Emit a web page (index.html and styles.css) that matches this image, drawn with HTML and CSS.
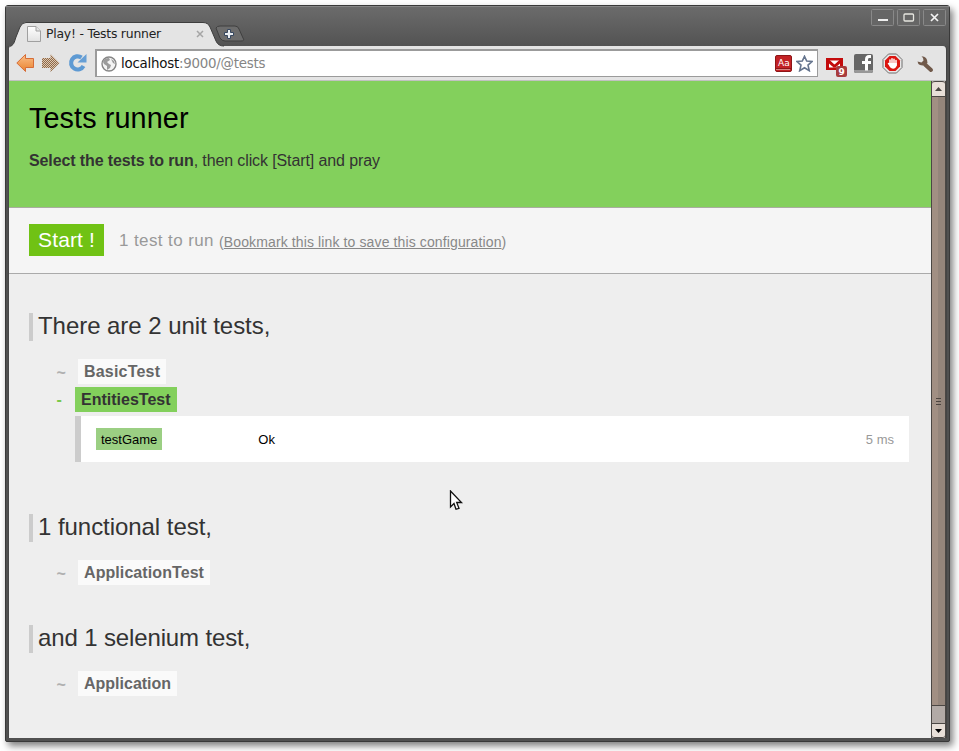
FILE: index.html
```html
<!DOCTYPE html>
<html lang="en">
<head>
<meta charset="utf-8">
<title>Play! - Tests runner</title>
<link rel="stylesheet" href="styles.css">
</head>
<body>
<div class="window">
  <div class="titlebar">
    <svg class="tabshape" width="240" height="26" viewBox="0 0 240 26">
      <path d="M207 6Q208 4 211 4H226Q229 4 230 7L234 16Q236 19 232 19H216Q213 19 211 16Z" fill="#6c6c6c" stroke="#3f3f3f"/>
      <path d="M0 25C5 23 5 21 7 15L11 5Q13 0.500 17 0.500H194Q199 0.500 201 5L207 19Q209 24 215 24H240V26H0Z" fill="#e4e4e4"/>
      <path d="M0 25C5 23 5 21 7 15L11 5Q13 .5 17 .5H194Q199 .5 201 5L207 19Q209 24 215 24" fill="none" stroke="#3d3d3d"/>
      <path d="M218.500 7.500h3v3h3v3h-3v3h-3v-3h-3v-3h3z" fill="#e9edf2" stroke="#36465e"/>
    </svg>
    <div class="tab">
      <svg width="14" height="16" viewBox="0 0 14 16"><defs><linearGradient id="pg" x2="0" y2="1"><stop stop-color="#fff"/><stop offset="1" stop-color="#e2e2e2"/></linearGradient></defs><path d="M.5.5H9L13.500 5V15.500H.5Z" fill="url(#pg)" stroke="#a0a0a0"/><path d="M9 .5V5H13.500" fill="#e5e5e5" stroke="#a0a0a0"/></svg>
      <span class="tabtitle">Play! - Tests runner</span>
      <svg width="8" height="8" viewBox="0 0 8 8"><path d="M1 1L7 7M7 1L1 7" stroke="#a5a5a5" stroke-width="1.500"/></svg>
    </div>
    <div class="controls">
      <svg width="23" height="17" viewBox="0 0 23 17"><rect class="btn" x=".5" y=".5" width="22" height="16" rx="1"/><path d="M7 11h10" stroke="#eee" stroke-width="2"/></svg>
      <svg width="23" height="17" viewBox="0 0 23 17"><rect class="btn" x=".5" y=".5" width="22" height="16" rx="1"/><rect x="7" y="5" width="9.500" height="7" rx="1" fill="none" stroke="#e6e6e0" stroke-width="1.300"/></svg>
      <svg width="23" height="17" viewBox="0 0 23 17"><rect class="btn" x=".5" y=".5" width="22" height="16" rx="1"/><path d="M8 5L15 12M15 5L8 12" stroke="#f4f4f4" stroke-width="1.700"/></svg>
    </div>
  </div>
  <div class="frame">
    <div class="toolbar">
      <svg class="nav" width="72" height="20" viewBox="0 0 72 20">
        <defs><linearGradient id="og" x2="0" y2="1"><stop stop-color="#fbc08a"/><stop offset="1" stop-color="#e9822d"/></linearGradient>
        <pattern id="dots" width="2" height="2" patternUnits="userSpaceOnUse"><rect width="2" height="2" fill="#ddc8b2"/><path d="M0 0h1v1H0zM1 1h1v1H1z" fill="#8e6949"/></pattern></defs>
        <path d="M.8 10L9.500 1.500V5.500H17.500V14.500H9.500V18.500Z" fill="url(#og)" stroke="#d66d38"/>
        <path d="M43.500 10L34.500 1V5H26V15H34.500V19Z" fill="url(#dots)"/>
        <path d="M67.500 13A6.600 6.600 0 1 1 65.500 4.500" fill="none" stroke="#5e9ad3" stroke-width="4.200"/><path d="M70.500 1V9.500H61.500Z" fill="#679fd5"/>
      </svg>
      <div class="address">
        <svg width="16" height="16" viewBox="0 0 16 16"><circle cx="8" cy="8" r="7" fill="#f4f4f4" stroke="#858585" stroke-width="1.400"/><path d="M2 6Q3 2 8 2L9 4L6 6L8 8L10 9L9 12L6 14L6 10L3 8ZM10 3L13 5L14 8L12 7Z" fill="#9b9b9b"/></svg>
        <span class="url">localhost<span>:9000/@tests</span></span>
        <svg class="dict" width="17" height="17" viewBox="0 0 17 17"><rect x=".5" y=".5" width="16" height="16" rx="1.500" fill="#c32225" stroke="#8e1517"/><path d="M1 14.500H15" stroke="#d98482"/><path d="M1 13.500H16" stroke="#8e1517"/><text x="3" y="10.500">Aa</text></svg>
        <svg width="17" height="17" viewBox="0 0 17 17"><path d="M8.500 1.300L10.700 6.100 16 6.500 12 10.100 13.300 15.700 8.500 12.700 3.700 15.700 5 10.100 1 6.500 6.300 6.100Z" fill="#fff" stroke="#66758e" stroke-width="1.600"/></svg>
      </div>
      <svg class="ext" width="110" height="26" viewBox="0 0 110 26">
        <path d="M0 6H17V18H0Z" fill="#c30b0c"/><path d="M3 8.500H14L8.500 13ZM3 11.500L5.500 13.700 8.500 16 11.500 13.700 14 11.500V15.500H3Z" fill="#fff"/>
        <path d="M2 8L8.500 14L15 8" fill="none" stroke="#c30b0c" stroke-width="2.200"/>
        <rect x="10" y="14" width="11" height="11" rx="2" fill="#a83c3d"/><text x="12.500" y="23" class="count">9</text>
        <rect x="28" y="2" width="19" height="19" rx="2" fill="#666"/><path d="M28 18H47V19Q47 21 45 21H30Q28 21 28 19Z" fill="#989898"/><path d="M45 4.500H43Q40.500 4.500 40.500 7.500V18.500M36 10.500H45" fill="none" stroke="#fff" stroke-width="3"/>
        <path d="M62.500 2H70.500L76 7.500V15.500L70.500 21H62.500L57 15.500V7.500Z" fill="#e8e8e8" stroke="#6f6f6f"/><path d="M63.500 4H69.500L74 8.500V14.500L69.500 19H63.500L59 14.500V8.500Z" fill="#dc1510"/>
        <path d="M64 8V13M66 6.800V12M68 7.300V12M70 8.500V13M62.500 11.500L65 14.500" stroke="#fff" stroke-width="1.500" stroke-linecap="round"/><path d="M63.300 11H70.800V13.500Q69.500 16.800 67 16.800Q64.800 16.800 63.300 14Z" fill="#fff"/>
        <path d="M99 12.500L105 18" stroke="#70594a" stroke-width="4" stroke-linecap="round"/><path d="M95.500 4.200Q101.500 4.500 101.500 11Q98.500 14.500 94 13Q91.800 12 91.500 9.500L95.500 10.500L97.500 8.500L97 6Z" fill="#70594a"/>
      </svg>
    </div>
    <div class="view">
      <main class="page">
        <header class="head"><h1>Tests runner</h1><p><b>Select the tests to run</b>, then click [Start] and pray</p></header>
        <div class="bar"><a class="start">Start !</a><span class="summary">1 test to run</span><span class="bookmark">(<u>Bookmark this link to save this configuration</u>)</span></div>
        <section class="unit">
          <h2>There are 2 unit tests,</h2>
          <div class="row"><i>~</i><b class="basic">BasicTest</b></div>
          <div class="row active"><i>-</i><b>EntitiesTest</b></div>
          <div class="result"><span class="name">testGame</span><span class="status">Ok</span><span class="time">5 ms</span></div>
        </section>
        <section class="functional"><h2>1 functional test,</h2><div class="row"><i>~</i><b class="app">ApplicationTest</b></div></section>
        <section class="selenium"><h2>and 1 selenium test,</h2><div class="row"><i>~</i><b>Application</b></div></section>
      </main>
      <div class="scroll">
        <div class="arrow"><svg width="7" height="4"><path d="M0 4L3.500 0L7 4Z" fill="#4a4743"/></svg></div>
        <div class="thumb"><svg width="5" height="7"><path d="M0 .5H5M0 3.500H5M0 6.500H5" stroke="#4d4540"/></svg></div>
        <div class="track"></div>
        <div class="arrow down"><svg width="7" height="4"><path d="M0 0L3.500 4L7 0Z" fill="#000"/></svg></div>
      </div>
    </div>
  </div>
</div>
<svg class="cursor" width="15" height="23" viewBox="0 0 15 23"><path d="M1.500 1V17L5 13.500L7 19.300L10 18.300L7.700 12.500H12.500Z" fill="#fff" stroke="#111" stroke-width="1.300"/></svg>
</body>
</html>
```

FILE: styles.css
```css
* { box-sizing: border-box; }
body { margin: 0; padding: 5px; width: 959px; height: 751px; overflow: hidden; background: #fff; font-family: "Liberation Sans", Arial, sans-serif; }
svg { display: block; flex: none; }
h1, h2, p { margin: 0; font-weight: normal; }
.window { width: 945px; height: 737px; padding: 0 3px 3px; background: #505050; border: 1px solid #393939; border-radius: 3px 3px 2px 2px; box-shadow: 3px 4px 7px rgba(0,0,0,.5); }
.titlebar { position: relative; height: 40px; margin: 0 -3px; padding: 3px 3px 0 21px; display: flex; justify-content: space-between; background: linear-gradient(#6b6b6b, #535353); border-top: 1px solid #858585; }
.tabshape { position: absolute; left: 3px; top: 15px; }
.tab { position: relative; display: flex; align-items: center; height: 16px; margin-top: 16px; }
.tabtitle { width: 150px; margin-left: 5px; font: 12.4px/16px "DejaVu Sans", sans-serif; letter-spacing: -.22px; color: #222; white-space: nowrap; }
.controls { display: flex; gap: 3px; margin-top: -1px; }
.btn { fill: #666; stroke: #898989; }
.frame { height: 692px; border-left: 1px solid #484848; border-right: 1px solid #444; margin: 0 -1px; border-radius: 0 4px 0 0; overflow: hidden; }
.toolbar { height: 35px; background: #e4e4e4; border-bottom: 1px solid #c1c1c1; display: flex; align-items: flex-start; padding-left: 7px; }
.nav { margin-top: 7px; }
.address { display: flex; align-items: center; width: 723px; height: 28px; margin: 3px 0 0 7px; padding: 0 4px; border: 2px solid #9b9b9b; border-right-width: 1px; border-bottom-width: 1px; background: #fff; }
.url { flex: 1; margin-left: 4px; font: 13.4px/20px "DejaVu Sans", sans-serif; letter-spacing: -.24px; color: #111; }
.url span { color: #858585; }
.dict { margin-right: 4px; }
.dict text { font: 9px "DejaVu Sans", sans-serif; fill: #fff; }
.ext { margin: 6px 0 0 8px; }
.count { font: bold 9px "DejaVu Sans", sans-serif; fill: #fff; }
.view { height: 657px; display: flex; }
.page { width: 922px; background: #eee; color: #333; }
.head { height: 127px; padding: 20px; background: #83d05c; border-bottom: 1px solid #a9ad9f; }
.head h1 { font-size: 28.8px; line-height: 34px; letter-spacing: .1px; color: #000; }
.head p { margin-top: 16px; font-size: 16px; line-height: 20px; letter-spacing: -.11px; }
.bar { height: 66px; padding: 16px 20px; display: flex; border-bottom: 1px solid #aaa; background: #f5f5f5; color: #999; white-space: nowrap; }
.start { width: 75px; height: 32px; padding-left: 9px; font-size: 21px; line-height: 32px; letter-spacing: .15px; color: #fff; background: #70c214; }
.summary { margin-left: 15px; width: 100px; font-size: 17px; line-height: 34px; letter-spacing: .4px; }
.bookmark { font-size: 14px; line-height: 36px; letter-spacing: .12px; color: #888; }
section { padding-left: 20px; height: 111px; }
section h2 { height: 28px; padding-left: 5px; border-left: 4px solid #ccc; font-size: 24px; line-height: 26px; letter-spacing: -.05px; }
.selenium h2 { letter-spacing: -.13px; }
.unit { height: 240px; padding-top: 39px; }
.row { display: flex; margin: 3px 0 0 26px; height: 25px; font-size: 16px; line-height: 25px; }
h2 + .row { margin-top: 18px; }
.row i { width: 23px; padding: 1px 0 0 1.5px; color: #b0b0b0; font-style: normal; font-weight: bold; }
.row b { padding: 0 6px; background: #fafafa; color: #666; }
.row .basic { letter-spacing: .2px; }
.row .app { letter-spacing: .08px; }
.row.active i { width: 20px; padding-top: 0; color: #79c94c; }
.row.active b { background: #83d05c; color: #333; }
.result { display: flex; align-items: center; width: 834px; height: 46px; margin: 4px 0 0 46px; padding: 0 15px; border-left: 6px solid #ccc; background: #fff; color: #000; font-size: 13px; line-height: 22px; }
.name { padding: 1px 5px 0; height: 22px; background: #9bcf83; }
.status { margin-left: 96px; padding-top: 1px; flex: 1; }
.time { color: #999; padding-top: 1px; }
.scroll { width: 15px; border: 1px solid #4b4744; border-width: 0 1px; display: flex; flex-direction: column; background: #b2aaa6; }
.arrow { height: 16px; display: flex; align-items: center; justify-content: center; background: #e8dfd8; border: solid #4b4744; border-width: 1px 0; border-radius: 3px 3px 0 0; }
.thumb { height: 608px; display: flex; align-items: center; justify-content: center; background: linear-gradient(90deg, #a18f83 50%, #94857b 50%); }
.track { flex: 1; border-top: 1px solid #4b4744; }
.down { height: 15px; border-radius: 0 0 3px 3px; }
.cursor { position: absolute; left: 449px; top: 490px; }
```
